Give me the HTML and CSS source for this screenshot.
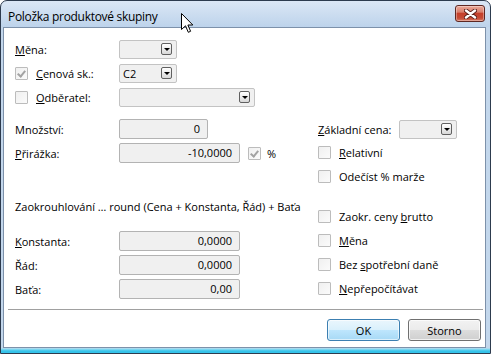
FILE: index.html
```html
<!DOCTYPE html>
<html lang="cs">
<head>
<meta charset="utf-8">
<link rel="stylesheet" href="styles.css">
</head>
<body>
<div class="window">
  <div class="titlebar">
    <span class="title">Položka produktové skupiny</span>
    <div class="close">
      <svg width="13" height="10" viewBox="0 0 13 10">
        <path d="M2 1.5 L11 8.5 M11 1.5 L2 8.5" stroke="#5a1f1a" stroke-width="4.2" stroke-linecap="round"/>
        <path d="M2 1.5 L11 8.5 M11 1.5 L2 8.5" stroke="#ffffff" stroke-width="2.4" stroke-linecap="round"/>
      </svg>
    </div>
  </div>
  <div class="client">
    <div class="top">
      <div class="row">
        <span class="label"><u>M</u>ěna:</span>
        <div class="combo w58"><span class="arrow"></span></div>
      </div>
      <div class="row">
        <span class="label"><span class="cb checked"></span><u>C</u>enová sk.:</span>
        <div class="combo w58"><span class="val">C2</span><span class="arrow"></span></div>
      </div>
      <div class="row">
        <span class="label"><span class="cb"></span><u>O</u>dběratel:</span>
        <div class="combo w136"><span class="arrow"></span></div>
      </div>
    </div>
    <div class="middle">
      <div class="left">
        <div class="lrow">
          <span class="label">Množství:</span>
          <div class="input w89">0</div>
        </div>
        <div class="lrow">
          <span class="label"><u>P</u>řirážka:</span>
          <div class="input w121">-10,0000</div>
          <span class="cb checked pct-cb"></span><span>%</span>
        </div>
        <div class="note">Zaokrouhlování … round (Cena + Konstanta, Řád) + Baťa</div>
        <div class="lrow konst">
          <span class="label"><u>K</u>onstanta:</span>
          <div class="input w121">0,0000</div>
        </div>
        <div class="lrow">
          <span class="label">Řád:</span>
          <div class="input w121">0,0000</div>
        </div>
        <div class="lrow">
          <span class="label">Baťa:</span>
          <div class="input w121">0,00</div>
        </div>
      </div>
      <div class="right">
        <div class="rrow-first">
          <span class="rlabel"><u>Z</u>ákladní cena:</span>
          <div class="combo w58"><span class="arrow"></span></div>
        </div>
        <div class="crow first"><span class="cb"></span><span><u>R</u>elativní</span></div>
        <div class="crow"><span class="cb"></span><span>Odečíst % marže</span></div>
        <div class="crow gap"><span class="cb"></span><span>Zaokr. ceny <u>b</u>rutto</span></div>
        <div class="crow"><span class="cb"></span><span><u>M</u>ěna</span></div>
        <div class="crow"><span class="cb"></span><span>Bez <u>s</u>potřební daně</span></div>
        <div class="crow"><span class="cb"></span><span><u>N</u>epřepočítávat</span></div>
      </div>
    </div>
    <div class="sep"></div>
    <div class="buttons">
      <div class="btn default">OK</div>
      <div class="btn">Storno</div>
    </div>
  </div>
  <svg class="cursor" width="13" height="21" viewBox="0 0 13 21">
    <path d="M0.5 0.5 L0.5 16.5 L4.5 12.8 L7.3 19.3 L9.6 18.3 L6.9 12 L11.8 12 Z" fill="#fff" stroke="#000" stroke-width="1" stroke-linejoin="miter"/>
  </svg>
</div>
</body>
</html>
```
FILE: styles.css
```css
* { box-sizing: border-box; }
html, body { margin: 0; padding: 0; }
body {
  width: 491px;
  height: 354px;
  overflow: hidden;
  font-family: "Open Sans", "Noto Sans", sans-serif;
  font-size: 11px;
  color: #000;
  background: #fff;
}
u { text-decoration: underline; text-underline-offset: 1px; text-decoration-thickness: 1px; }

.window {
  position: relative;
  width: 491px;
  height: 354px;
  border: 1px solid #2d3b4e;
  border-radius: 7px 7px 0 0;
  background: linear-gradient(to bottom, #dbe7f5 0px, #bdd3eb 26px, #c3d7ec 26px, #c3d7ec 347px, #8fdcf2 348px, #36c3ea 350px, #36c3ea 352px);
  display: flex;
  flex-direction: column;
}

.titlebar {
  height: 26px;
  display: flex;
  justify-content: space-between;
  align-items: flex-start;
  padding: 0 5px 0 7px;
}
.title {
  font-size: 12px;
  line-height: 16px;
  margin-top: 8px;
  letter-spacing: -0.3px;
  color: #000;
}
.close {
  width: 30px;
  height: 17px;
  margin-top: 4px;
  border: 1px solid #5e2722;
  border-radius: 3px;
  background: linear-gradient(to bottom, #eba999 0%, #d8806e 40%, #c53f2a 50%, #c44a35 80%, #d97a63 100%);
  box-shadow: inset 0 0 0 1px rgba(255,255,255,0.35);
  display: flex;
  align-items: center;
  justify-content: center;
}

.client {
  flex: 1;
  margin: 0 4px 5px 2px;
  border: 1px solid #7d91aa;
  background: #fff;
  display: flex;
  flex-direction: column;
}

.top {
  padding: 12px 0 0 11px;
  display: flex;
  flex-direction: column;
  gap: 5px;
}
.row {
  height: 19px;
  display: flex;
  align-items: center;
}
.label {
  width: 104px;
  display: flex;
  align-items: center;
  flex-shrink: 0;
}

.cb {
  width: 13px;
  height: 13px;
  border: 1px solid #bcbcbc;
  border-radius: 1px;
  background: linear-gradient(135deg, #f0f0f0, #fbfbfb);
  margin-right: 8px;
  flex-shrink: 0;
  position: relative;
}
.cb.checked::after {
  content: "";
  position: absolute;
  left: 3px;
  top: 1px;
  width: 3px;
  height: 6px;
  border-right: 2px solid #a3a3a3;
  border-bottom: 2px solid #a3a3a3;
  transform: rotate(40deg);
}

.combo {
  height: 19px;
  border: 1px solid #c3c3c3;
  border-radius: 2px;
  background: #f0f0f0;
  position: relative;
  display: flex;
  align-items: center;
  padding-left: 3px;
}
.combo .val { line-height: 16px; }
.w58 { width: 58px; }
.w136 { width: 136px; }
.arrow {
  position: absolute;
  right: 4px;
  top: 2px;
  width: 11px;
  height: 12px;
  border: 1px solid #606060;
  border-radius: 2px;
  background: linear-gradient(to bottom, #ffffff, #d8d8d8);
}
.arrow::after {
  content: "";
  position: absolute;
  left: 2px;
  top: 4px;
  border-left: 3px solid transparent;
  border-right: 3px solid transparent;
  border-top: 3px solid #000;
}

.middle {
  margin-top: 12px;
  padding-left: 11px;
  display: flex;
}
.left {
  width: 303px;
  display: flex;
  flex-direction: column;
  gap: 4px;
}
.lrow {
  height: 20px;
  display: flex;
  align-items: center;
}
.input {
  height: 20px;
  border: 1px solid #b3b3b3;
  border-radius: 2px;
  background: #f0f0f0;
  text-align: right;
  padding-right: 7px;
  line-height: 18px;
}
.w89 { width: 89px; }
.w121 { width: 121px; }
.pct-cb { margin-left: 8px; margin-right: 6px; }
.note {
  height: 20px;
  line-height: 20px;
  margin-top: 30px;
  white-space: nowrap;
}
.lrow.konst { margin-top: 10px; }

.right {
  display: flex;
  flex-direction: column;
}
.rrow-first {
  height: 20px;
  display: flex;
  align-items: center;
}
.rlabel { width: 81px; }
.crow {
  height: 24px;
  display: flex;
  align-items: center;
}
.crow.first { margin-top: 1px; }
.crow.gap { margin-top: 16px; }

.sep {
  height: 1px;
  background: #a0a0a0;
  margin: 9px 2px 0 4px;
}
.buttons {
  margin-top: 9px;
  display: flex;
  justify-content: flex-end;
  gap: 8px;
  padding-right: 4px;
}
.btn {
  width: 73px;
  height: 22px;
  border: 1px solid #707070;
  border-radius: 3px;
  background: linear-gradient(to bottom, #f2f2f2 0%, #ebebeb 50%, #dddddd 51%, #cfcfcf 100%);
  box-shadow: inset 0 0 0 1px rgba(255,255,255,0.7);
  display: flex;
  align-items: center;
  justify-content: center;
}
.btn.default {
  border-color: #3c7fb1;
  background: linear-gradient(to bottom, #eaf6fd 0%, #d9f0fc 50%, #bee6fd 51%, #a7d9f5 100%);
  box-shadow: inset 0 0 0 1px rgba(255,255,255,0.6);
}

.cursor {
  position: absolute;
  left: 180px;
  top: 12px;
}
```
